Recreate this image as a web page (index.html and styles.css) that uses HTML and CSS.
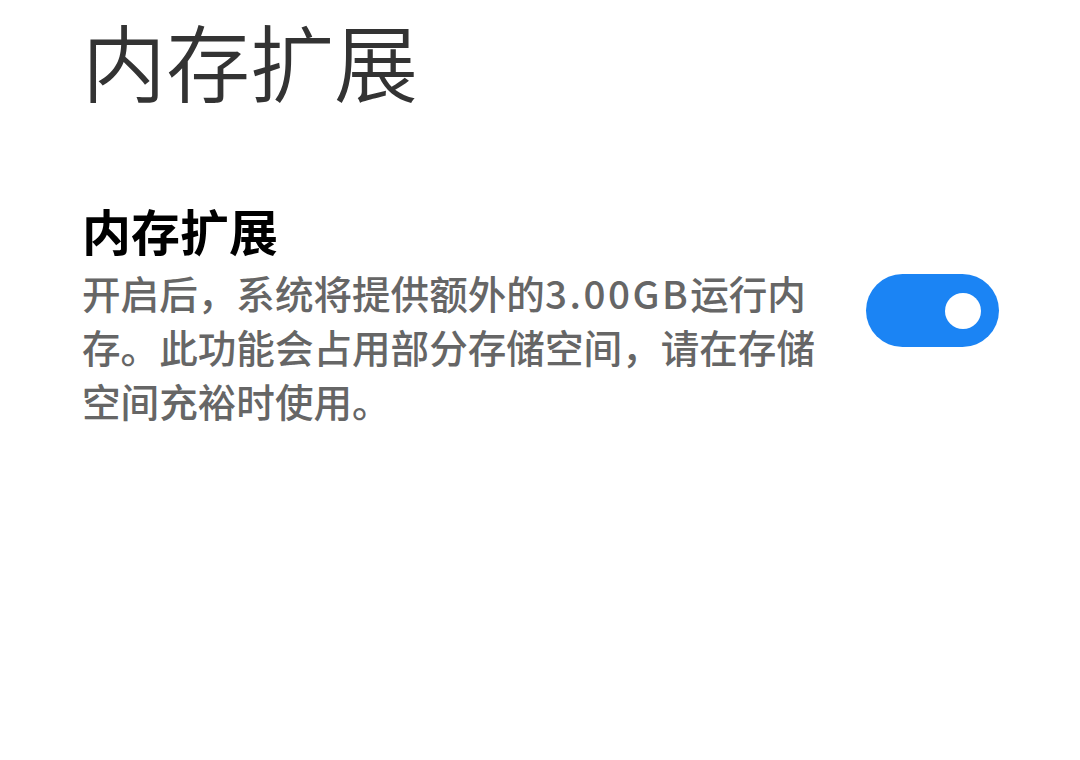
FILE: index.html
```html
<!DOCTYPE html>
<html lang="zh-CN">
<head>
  <meta charset="UTF-8">
  <meta name="viewport" content="width=device-width, initial-scale=1.0">
  <title>内存扩展</title>
  <link rel="stylesheet" href="styles.css">
</head>
<body>
  <h1 class="page-title">内存扩展</h1>
  <div class="setting-row">
    <div class="setting-text">
      <h2 class="setting-title">内存扩展</h2>
      <p class="setting-desc">开启后，系统将提供额外的<span class="num">3.00GB</span>运行内存。此功能会占用部分存储空间，请在存储空间充裕时使用。</p>
    </div>
    <div class="switch on"><span class="knob"></span></div>
  </div>
</body>
</html>
```

FILE: styles.css
```css
body {
  font-family: "Noto Sans CJK SC", "Noto Sans", sans-serif;
  margin: 0;
  padding: 0 81px 0 82px;
  background: #fff;
}
.page-title {
  margin: 10px 0 0;
  font-size: 84px;
  font-weight: 350;
  line-height: 100px;
  color: #333;
}
.setting-row {
  display: flex;
  align-items: center;
  justify-content: space-between;
  margin-top: 90px;
}
.setting-text {
  width: 745px;
}
.setting-title {
  margin: 0;
  font-size: 49px;
  font-weight: 700;
  line-height: 60px;
  color: #000;
}
.setting-desc {
  margin: 5px 0 0;
  font-size: 38.6px;
  line-height: 54px;
  font-weight: 500;
  color: #666;
}
.num {
  letter-spacing: 2.5px;
}
.switch {
  width: 133px;
  height: 73px;
  border-radius: 37px;
  background: #1b84f4;
  display: flex;
  align-items: center;
  justify-content: flex-end;
  padding-right: 18px;
  box-sizing: border-box;
  flex-shrink: 0;
  margin-bottom: 6px;
}
.knob {
  width: 36px;
  height: 36px;
  border-radius: 50%;
  background: #fff;
}
```
